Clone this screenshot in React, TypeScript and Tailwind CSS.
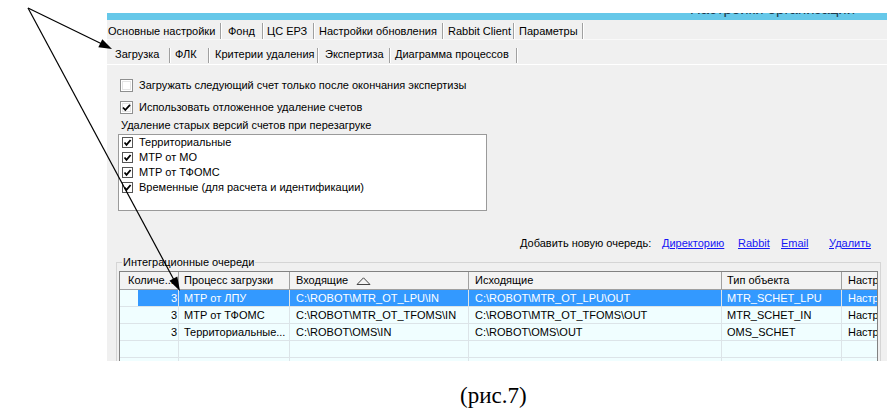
import type { ReactNode } from 'react'

const ui = "font-['Liberation_Sans',Arial,sans-serif] text-[11px] leading-[13px] text-black"

const queues = [
  { n: 3, proc: 'МТР от ЛПУ', inDir: 'C:\\ROBOT\\MTR_OT_LPU\\IN', outDir: 'C:\\ROBOT\\MTR_OT_LPU\\OUT', type: 'MTR_SCHET_LPU', sel: true },
  { n: 3, proc: 'МТР от ТФОМС', inDir: 'C:\\ROBOT\\MTR_OT_TFOMS\\IN', outDir: 'C:\\ROBOT\\MTR_OT_TFOMS\\OUT', type: 'MTR_SCHET_IN', sel: false },
  { n: 3, proc: 'Территориальные...', inDir: 'C:\\ROBOT\\OMS\\IN', outDir: 'C:\\ROBOT\\OMS\\OUT', type: 'OMS_SCHET', sel: false },
]

const cols = 'grid grid-cols-[59px_111px_179px_253px_120px_35px]'

function Tab({ label, className, sep }: { label: string; className: string; sep: string }) {
  return (
    <div className={`flex h-full shrink-0 ${className}`}>
      <span className="flex-1 whitespace-nowrap">{label}</span>
      <span className={`w-[1px] bg-[#a0a0a0] ${sep}`} />
      <span className={`w-[1px] bg-white ${sep}`} />
    </div>
  )
}

function Check({ checked, small }: { checked: boolean; small?: boolean }) {
  const s = small ? 11 : 13
  return (
    <svg width={s} height={s} viewBox={`0 0 ${s} ${s}`} className="shrink-0">
      <rect x="0.5" y="0.5" width={s - 1} height={s - 1} fill="#fff" stroke={small ? '#555' : '#8e8f8f'} />
      {!small && <rect x="2.5" y="2.5" width={s - 5} height={s - 5} fill="none" stroke="#e4e4e4" />}
      {checked && (
        <path
          d={small ? 'M2.5 5.5 L4.5 7.8 L8.6 3' : 'M3 6.5 L5.3 9 L10 3.8'}
          fill="none"
          stroke="#000"
          strokeWidth="1.8"
        />
      )}
    </svg>
  )
}

function Cell({ children, className = '' }: { children?: ReactNode; className?: string }) {
  return <div className={`h-full overflow-hidden whitespace-nowrap border-r border-[#dce4e8] ${className}`}>{children}</div>
}

export default function App() {
  return (
    <div className="relative h-[410px] w-[887px] overflow-hidden bg-white">
      <div className={`ml-[107px] mt-[13px] flex h-[348px] w-[780px] flex-col overflow-hidden bg-[#f0f0f0] ${ui}`}>
        {/* window caption, cut off */}
        <div className="h-[7px] shrink-0 overflow-hidden bg-[#66c8e9]">
          <div className="ml-[583px] -mt-[12px] whitespace-nowrap text-[15px] leading-[15px] text-[#1d3a4c]">
            Настройки организации
          </div>
        </div>

        {/* top tabs */}
        <div className="flex h-[20px] shrink-0 border-b border-[#f9f9f9]">
          <Tab label="Основные настройки" className="w-[115px] pl-[1px] pt-[5px]" sep="-mt-[2px] h-[16px]" />
          <Tab label="Фонд" className="w-[42px] pl-[6px] pt-[5px]" sep="-mt-[2px] h-[16px]" />
          <Tab label="ЦС ЕРЗ" className="w-[51px] pl-[3px] pt-[5px]" sep="-mt-[2px] h-[16px]" />
          <Tab label="Настройки обновления" className="w-[129px] pl-[4px] pt-[5px]" sep="-mt-[2px] h-[16px]" />
          <Tab label="Rabbit Client" className="w-[71px] pl-[4px] pt-[5px]" sep="-mt-[2px] h-[16px]" />
          <Tab label="Параметры" className="w-[69px] pl-[4px] pt-[5px]" sep="-mt-[2px] h-[16px]" />
        </div>

        {/* sub tabs */}
        <div className="flex h-[25px] shrink-0 border-b border-white pl-[3px]">
          <Tab label="Загрузка" className="w-[61px] pl-[5px] pt-[8px]" sep="-mt-[0px] h-[15px]" />
          <Tab label="ФЛК" className="w-[39px] pl-[4px] pt-[8px]" sep="h-[15px]" />
          <Tab label="Критерии удаления" className="w-[109px] pl-[5px] pt-[8px]" sep="h-[15px]" />
          <Tab label="Экспертиза" className="w-[72px] pl-[6px] pt-[8px]" sep="h-[15px]" />
          <Tab label="Диаграмма процессов" className="w-[127px] pl-[4px] pt-[8px]" sep="h-[15px]" />
        </div>

        <div className="mt-[14px] flex items-center gap-[6px] pl-[13px]">
          <Check checked={false} />
          <span>Загружать следующий счет только после окончания экспертизы</span>
        </div>
        <div className="mt-[9px] flex items-center gap-[6px] pl-[13px]">
          <Check checked />
          <span>Использовать отложенное удаление счетов</span>
        </div>
        <div className="mt-[5px] pl-[14px]">Удаление старых версий счетов при перезагруке</div>

        <div className="ml-[11px] mt-[2px] h-[77px] w-[369px] shrink-0 border border-[#9a9a9a] bg-white">
          {['Территориальные', 'МТР от МО', 'МТР от ТФОМС', 'Временные (для расчета и идентификации)'].map((t) => (
            <div key={t} className="flex h-[15px] items-center gap-[6px] pl-[3px]">
              <Check checked small />
              <span>{t}</span>
            </div>
          ))}
        </div>

        {/* add queue links */}
        <div className="mt-[26px] flex shrink-0 whitespace-nowrap pl-[413px]">
          <span className="w-[142px]">Добавить новую очередь:</span>
          <span className="w-[76px] text-[#1616f5] underline">Директорию</span>
          <span className="w-[43px] text-[#1616f5] underline">Rabbit</span>
          <span className="w-[48px] text-[#1616f5] underline">Email</span>
          <span className="text-[#1616f5] underline">Удалить</span>
        </div>

        <fieldset className="ml-[9px] mt-[6px] w-[765px] shrink-0 border border-[#d5d5d5] pb-[20px]">
          <legend className="ml-[5px] px-[1px]">Интеграционные очереди</legend>
          <div className="ml-[2px] mt-[2px] w-[759px] border border-[#828282] bg-[#f0feff]">
            <div className={`${cols} h-[18px] border-b border-[#a0a0a0] bg-[#f3f3f3] leading-[17px]`}>
              <div className="border-r border-[#a0a0a0] pl-[8px]">Количе...</div>
              <div className="border-r border-[#a0a0a0] pl-[5px]">Процесс загрузки</div>
              <div className="flex items-center gap-[8px] border-r border-[#a0a0a0] pl-[6px]">
                <span>Входящие</span>
                <svg width="15" height="8" viewBox="0 0 15 8">
                  <path d="M1 7.5 L7.5 0.8 L14 7.5 Z" fill="none" stroke="#444" />
                </svg>
              </div>
              <div className="border-r border-[#a0a0a0] pl-[6px]">Исходящие</div>
              <div className="border-r border-[#a0a0a0] pl-[5px]">Тип объекта</div>
              <div className="overflow-hidden whitespace-nowrap pl-[6px]">Настройки</div>
            </div>

            {queues.map((q) => {
              const sel = q.sel ? 'bg-[#3399ff] text-white' : ''
              return (
                <div key={q.proc} className={`${cols} h-[17px] border-b border-[#dce4e8] leading-[16px]`}>
                  <Cell>
                    <div className={`ml-[18px] h-full pr-[1px] text-right ${sel}`}>{q.n}</div>
                  </Cell>
                  <Cell className={`pl-[5px] ${sel}`}>{q.proc}</Cell>
                  <Cell className={`pl-[6px] ${sel}`}>{q.inDir}</Cell>
                  <Cell className={`pl-[6px] ${sel}`}>{q.outDir}</Cell>
                  <Cell className={`pl-[5px] ${sel}`}>{q.type}</Cell>
                  <Cell className={`border-r-0 pl-[6px] ${sel}`}>Настройки</Cell>
                </div>
              )
            })}
            {[0, 1].map((i) => (
              <div key={i} className={`${cols} h-[17px] border-b border-[#dce4e8]`}>
                <Cell />
                <Cell />
                <Cell />
                <Cell />
                <Cell />
                <Cell className="border-r-0" />
              </div>
            ))}
          </div>
        </fieldset>
      </div>

      <div className="ml-[460px] mt-[23px] font-['Liberation_Serif','Times_New_Roman',serif] text-[23px] leading-[24px] text-black">
        (рис.7)
      </div>

      {/* callout arrows drawn over the screenshot */}
      <svg className="pointer-events-none absolute left-0 top-0" width="887" height="410" viewBox="0 0 887 410">
        <line x1="28" y1="8" x2="102" y2="44" stroke="#000" strokeWidth="1.2" />
        <polygon points="112,49 102.3,39.3 98.3,47.3" fill="#000" />
        <line x1="28" y1="8" x2="174" y2="280" stroke="#000" strokeWidth="1.2" />
        <polygon points="180,291 177.3,276.6 169.4,280.8" fill="#000" />
      </svg>
    </div>
  )
}
